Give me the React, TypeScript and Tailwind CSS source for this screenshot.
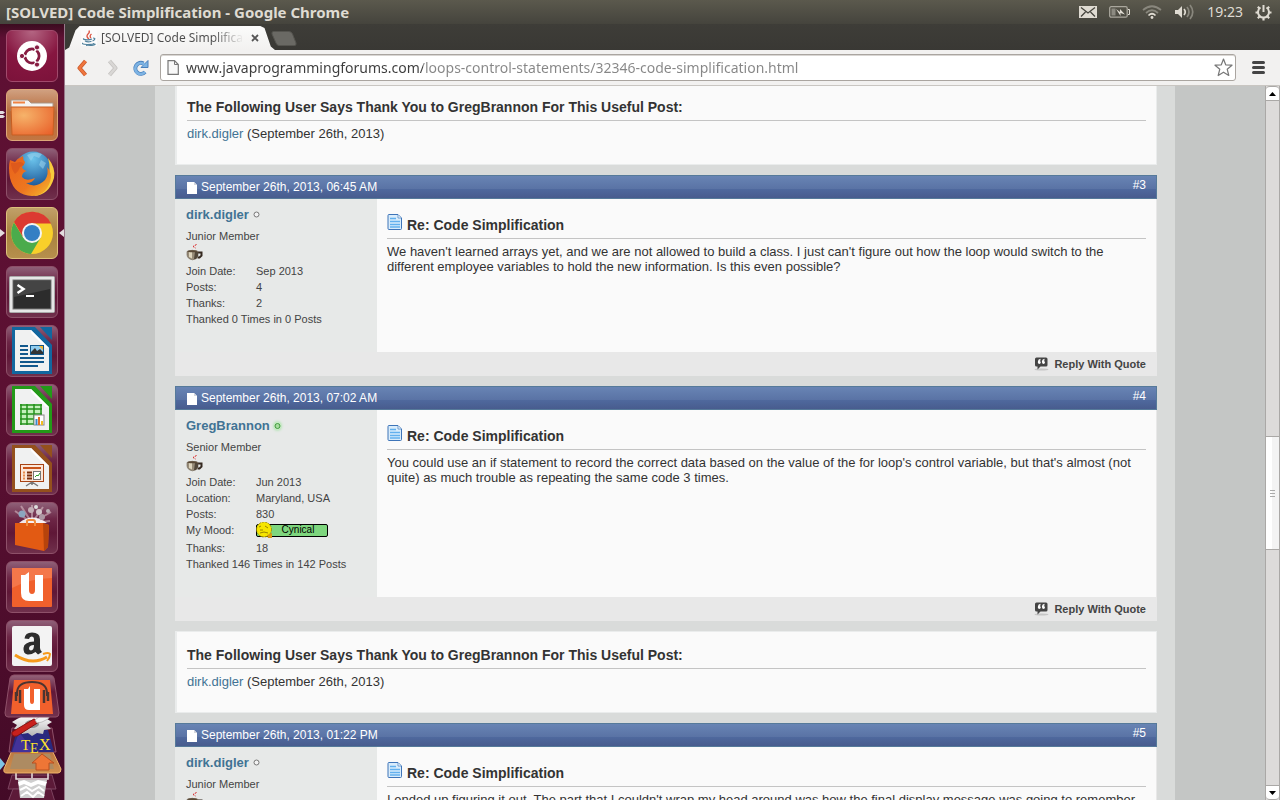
import type { ReactNode } from 'react';

type Stat = { label: string; value: ReactNode };

type PostData = {
  id: number;
  date: string;
  author: string;
  online: boolean;
  rank: string;
  stats: Stat[];
  thanked: string;
  body: string;
};

function CoffeeIcon() {
  return (
    <svg width="17" height="17" viewBox="0 0 17 17" className="block" aria-hidden="true">
      <path d="M10.500 0.500 L7 2.500 L9.500 4" fill="none" stroke="#d81818" strokeWidth="1" strokeDasharray="2 1" />
      <path d="M12 8.500 H15.500 V11.500 L13.500 13.500 H11.500" fill="none" stroke="#35291f" strokeWidth="2" />
      <path d="M1 7.500 Q6 5 12 7.500 V12 Q10.500 15.800 6.500 15.800 Q1.500 15 1 11 Z" fill="#978c78" stroke="#6b6050" strokeWidth="0.600" />
      <path d="M3 8 H6 V14.500 L3 13 Z" fill="#ddd4bd" />
      <path d="M9 8 H12 V12 L10 15 H8 Z" fill="#51473a" />
      <ellipse cx="6.500" cy="7.200" rx="5" ry="1" fill="#5a4936" />
    </svg>
  );
}

function MoodBadge() {
  return (
    <span className="flex h-4 w-[72px] items-center">
      <svg width="16" height="16" viewBox="0 0 16 16" className="relative z-10 shrink-0" aria-hidden="true">
        <circle cx="8" cy="7.500" r="7.500" fill="#f6e500" stroke="#8a7a00" strokeWidth="0.800" strokeDasharray="2 1" />
        <path d="M3 5 L5 4 M4 8 H7 M9 4 L12 6 M4 11 Q8 9 12 11" fill="none" stroke="#9a8500" strokeWidth="1" />
        <path d="M11 13 L16 11 V16 H12 Z" fill="#d79b12" />
      </svg>
      <span className="-ml-4 flex h-[13px] flex-1 items-center justify-center rounded-xs border border-black bg-[#7ed67e] pl-3 text-[10px] leading-none text-black">
        Cynical
      </span>
    </span>
  );
}

const posts: Record<'three' | 'four' | 'five', PostData> = {
  three: {
    id: 3,
    date: 'September 26th, 2013, 06:45 AM',
    author: 'dirk.digler',
    online: false,
    rank: 'Junior Member',
    stats: [
      { label: 'Join Date:', value: 'Sep 2013' },
      { label: 'Posts:', value: '4' },
      { label: 'Thanks:', value: '2' },
    ],
    thanked: 'Thanked 0 Times in 0 Posts',
    body: "We haven't learned arrays yet, and we are not allowed to build a class. I just can't figure out how the loop would switch to the different employee variables to hold the new information. Is this even possible?",
  },
  four: {
    id: 4,
    date: 'September 26th, 2013, 07:02 AM',
    author: 'GregBrannon',
    online: true,
    rank: 'Senior Member',
    stats: [
      { label: 'Join Date:', value: 'Jun 2013' },
      { label: 'Location:', value: 'Maryland, USA' },
      { label: 'Posts:', value: '830' },
      { label: 'My Mood:', value: <MoodBadge /> },
      { label: 'Thanks:', value: '18' },
    ],
    thanked: 'Thanked 146 Times in 142 Posts',
    body: "You could use an if statement to record the correct data based on the value of the for loop's control variable, but that's almost (not quite) as much trouble as repeating the same code 3 times.",
  },
  five: {
    id: 5,
    date: 'September 26th, 2013, 01:22 PM',
    author: 'dirk.digler',
    online: false,
    rank: 'Junior Member',
    stats: [
      { label: 'Join Date:', value: 'Sep 2013' },
      { label: 'Posts:', value: '4' },
      { label: 'Thanks:', value: '2' },
    ],
    thanked: 'Thanked 0 Times in 0 Posts',
    body: "I ended up figuring it out. The part that I couldn't wrap my head around was how the final display message was going to remember",
  },
};

function Post({ post }: { post: PostData }) {
  return (
    <article>
      <header className="flex h-6 items-center justify-between border border-[#567a9a] bg-[linear-gradient(#6884b4,#5a73a5_58%,#4f699e_58%,#485c8e)] pr-2.5 pl-[11px] text-xs text-white">
        <span className="flex items-center gap-1">
          <svg width="10" height="13" viewBox="0 0 10 13" aria-hidden="true">
            <path d="M0 1 H7 L10 4 V13 H0 Z" fill="#fff" />
            <path d="M7 1 V4 H10 Z" fill="#d5d8dd" />
          </svg>
          {post.date}
        </span>
        <a href={`#post${post.id}`} className="pb-1">#{post.id}</a>
      </header>
      <div className="flex bg-[#e7e9e8]">
        <div className="w-[202px] shrink-0 pt-2 pb-[25px] pl-[11px] text-[11px] leading-4 text-[#444]">
          <div className="flex h-[15px] items-center gap-1">
            <a href="#member" className="text-[13px] font-bold text-[#417394]">{post.author}</a>
            {post.online ? (
              <svg width="7" height="8" viewBox="0 0 7 8" aria-label="online" className="rounded-full bg-[#c8ecc4] shadow-[0_0_3px_#8ce08c]">
                <circle cx="3.500" cy="4" r="2.500" fill="#a8dca0" stroke="#3f9a3c" />
              </svg>
            ) : (
              <svg width="8" height="8" viewBox="0 0 8 8" aria-label="offline">
                <circle cx="3.500" cy="3.500" r="2.500" fill="#f3f3f3" stroke="#777" />
              </svg>
            )}
          </div>
          <div className="mt-1.5">{post.rank}</div>
          <CoffeeIcon />
          <dl className="mt-0.5 grid grid-cols-[70px_auto]">
            {post.stats.map((s) => (
              <div key={s.label} className="contents">
                <dt>{s.label}</dt>
                <dd className={typeof s.value === 'string' ? '' : 'pb-0.5'}>{s.value}</dd>
              </div>
            ))}
          </dl>
          <div>{post.thanked}</div>
        </div>
        <div className="min-w-0 flex-1 border-r border-[#e8e8e8] bg-[#fafafa] pt-[15px] pr-2.5 pl-2.5">
          <h2 className="flex h-[25px] items-start gap-1 border-b border-[#c4c4c4] text-sm font-bold text-[#333]">
            <svg width="16" height="17" viewBox="0 0 16 17" aria-hidden="true">
              <path d="M2 0.500 H11 L14.500 4 V14.500 Q14.500 15.500 13.500 15.500 H2 Q1 15.500 1 14.500 V1.500 Q1 0.500 2 0.500 Z" fill="#d9ecfb" stroke="#3e74b8" />
              <path d="M11 1 V4 H14" fill="#fff" stroke="#6f9dd0" />
              <path d="M3 4.500 H9 M3 7.500 H13 M3 10.500 H13 M3 13 H13" stroke="#62b0ee" strokeWidth="1.500" />
            </svg>
            <span className="pt-px">Re: Code Simplification</span>
          </h2>
          <p className="pt-[5px] text-[13px] leading-[15px] text-[#333]">{post.body}</p>
        </div>
      </div>
      <footer className="flex h-6 items-center justify-end bg-[#e8e8e8] pr-[11px]">
        <a href="#reply" className="flex items-center gap-[5px] text-[11px] font-bold text-[#444]">
          <svg width="15" height="14" viewBox="0 0 15 14" aria-hidden="true">
            <ellipse cx="7.500" cy="12.500" rx="7" ry="1" fill="#c6c6c6" />
            <path d="M2.500 0.500 H12 Q13.500 0.500 13.500 2 V8 Q13.500 9.500 12 9.500 H6.500 L3.500 12.500 V9.500 H2.500 Q1 9.500 1 8 V2 Q1 0.500 2.500 0.500 Z" fill="#444" />
            <path d="M6.500 2.500 Q4.500 3 4.500 5 M10.500 2.500 Q8.500 3 8.500 5" fill="none" stroke="#fff" strokeWidth="1.300" />
            <circle cx="5.300" cy="5.500" r="1.400" fill="#fff" />
            <circle cx="9.500" cy="5.500" r="1.400" fill="#fff" />
          </svg>
          Reply With Quote
        </a>
      </footer>
    </article>
  );
}

function ThanksBox() {
  return (
    <section className="h-[82px] border border-l-2 border-[#eaecec] bg-[#fafafa] px-2.5 pt-[13px] text-[13px] text-[#333]">
      <h2 className="h-6 border-b border-[#c4c4c4] text-sm leading-5 font-bold">
        The Following User Says Thank You to GregBrannon For This Useful Post:
      </h2>
      <p className="pt-[5px] leading-[15px]">
        <a href="#member" className="text-[#417394]">dirk.digler</a> (September 26th, 2013)
      </p>
    </section>
  );
}

function Tile({ label, tone, children }: { label: string; tone: string; children: ReactNode }) {
  return (
    <button type="button" aria-label={label} className={`flex size-[52px] shrink-0 items-center justify-center rounded-md border ${tone}`}>
      <svg width="50" height="50" viewBox="0 0 50 50" aria-hidden="true">
        {children}
      </svg>
    </button>
  );
}

const wine = 'border-[#8e5069] bg-[linear-gradient(#8f6078,#6d2646_32%,#5f1737_60%,#70304c)]';

function OfficePage({ color }: { color: string }) {
  return (
    <>
      <path d="M5 1 H28 L45 19 V48 H5 Z" fill={color} />
      <path d="M33 1 H45 V14 Z" fill={color} />
      <path d="M8 4 H24 L42 22 V45 H8 Z" fill="#f0f1f1" />
      <path d="M24 4 L42 22 H39 L24 7 Z" fill="#fff" />
    </>
  );
}

function FoldedStack() {
  return (
    <svg width="65" height="128" viewBox="0 0 65 128" className="-ml-1.5 block shrink-0" aria-hidden="true">
      <defs>
        <linearGradient id="fold" x1="0" y1="0" x2="0" y2="1">
          <stop offset="0" stopColor="#94637a" />
          <stop offset="0.400" stopColor="#611838" />
          <stop offset="1" stopColor="#71314d" />
        </linearGradient>
        <linearGradient id="steel" x1="0" y1="0" x2="0" y2="1">
          <stop offset="0" stopColor="#fff" />
          <stop offset="1" stopColor="#b5b5b5" />
        </linearGradient>
        <linearGradient id="brown" x1="0" y1="0" x2="0" y2="1">
          <stop offset="0" stopColor="#b87540" />
          <stop offset="1" stopColor="#d09050" />
        </linearGradient>
      </defs>
      <path d="M12 103 H52 L56 117 H8 Z" fill="#5c1a38" stroke="#7d4460" />
      <path d="M13 117 H51 L55 130 H8 Z" fill="#5c1a38" stroke="#7d4460" />
      <path d="M18 108 H47 L44 126 H20 Z" fill="#cfcfcf" />
      <path d="M18 110 L24 108 L31 111 L38 108 L47 110 L45 114 L38 112 L31 115 L24 112 L19 114 Z" fill="#fff" />
      <path d="M20 118 L26 115 L32 119 L39 115 L44 119 M21 124 L27 120 L33 125 L38 120 L44 124" fill="none" stroke="#fff" strokeWidth="2" />
      <path d="M16 97 V107 H21 M48 97 V107 H43 M32 99 V106 M18 107 H46" fill="none" stroke="#e9e3e0" strokeWidth="1.500" />
      <path d="M13 76 H51 L61 97 Q61 101 58 101 H7 Q3 101 4 97 Z" fill="url(#brown)" stroke="#f0b36b" />
      <path d="M14 82 H50 L54 97 H10 Z" fill="#ad8b62" />
      <path d="M42 82 L54 91 H49 V98 H36 V91 H32 Z" fill="#ee7636" stroke="#b85020" />
      <path d="M12 56 H52 L56 80 H9 Z" fill="#571331" stroke="#8e5069" />
      <path d="M17 58 H48 L54 80 H11 Z" fill="#29297f" />
      <path d="M19 60 L34 80 H12 Z" fill="#43329a" />
      <text x="21" y="78" fontFamily="Liberation Serif, serif" fontSize="15" fill="#ffe12e">T</text>
      <text x="30" y="81" fontFamily="Liberation Serif, serif" fontSize="14" fill="#ffe12e">E</text>
      <text x="39" y="78" fontFamily="Liberation Serif, serif" fontSize="16" fill="#ffe12e">X</text>
      <path d="M17 47 L12 50 L17 53 L14 57 L21 58 L22 62 L28 61 L32 64 L37 61 L43 62 L44 58 L51 57 L47 53 L52 50 L47 47 L41 44 L25 43 Z" fill="url(#steel)" />
      <ellipse cx="32" cy="52" rx="7" ry="4" fill="#8c8c8c" />
      <path d="M12 60 L34 47 L39 50 L17 64 Q11 65 12 60 Z" fill="#c8201c" stroke="#851010" />
      <path d="M35 48 L40 44 L50 44 L48 47 L42 50 L37 51 Z" fill="#f2f2f2" stroke="#aaa" strokeWidth="0.700" />
      <path d="M14 3 H50 Q53 3 54 6 L59 41 Q59 45 56 45 H8 Q5 45 5 41 L10 6 Q11 3 14 3 Z" fill="url(#fold)" stroke="#8e5069" />
      <path d="M14 8 H50 L53 42 H11 Z" fill="#f2602c" />
      <path d="M17 24 V20 Q18 10 32 10 Q46 10 47 20 V24" fill="none" stroke="#4b3430" strokeWidth="2" />
      <path d="M16 20 V29 M20 18 V31 M44 18 V31 M48 20 V29" stroke="#4b3430" strokeWidth="2.500" />
      <path d="M24 17 H28 L30 14 V29 Q30 32 32 32 Q34 32 34 29 V17 H40 V38 H29 Q24 38 24 33 Z" fill="#fff" />
      <path d="M0 86 L5 92 L0 98 Z" fill="#7fc4e6" />
    </svg>
  );
}

function Launcher() {
  return (
    <nav aria-label="Launcher" className="flex w-[65px] shrink-0 flex-col gap-[7px] overflow-hidden border-r border-[#98788a] bg-[linear-gradient(#3b0c20,#5e1033_14px,#5b1032_50%,#430a27)] pt-1.5 pl-1.5">
      <Tile label="Dash home" tone="border-[#a14a6c] bg-[radial-gradient(circle_at_50%_0,#b46683,#861640_55%,#7b123a)]">
        <circle cx="25" cy="25" r="15" fill="#fff" />
        <circle cx="25" cy="25" r="7" fill="none" stroke="#861c42" strokeWidth="3" />
        <path d="M25 25 L11 25 M25 25 L32 13 M25 25 L32 37" stroke="#fff" strokeWidth="1.500" />
        <circle cx="25" cy="25" r="5.500" fill="#fff" />
        <circle cx="15" cy="25" r="2.600" fill="#861c42" stroke="#fff" />
        <circle cx="30" cy="16.400" r="2.600" fill="#861c42" stroke="#fff" />
        <circle cx="30" cy="33.600" r="2.600" fill="#861c42" stroke="#fff" />
      </Tile>
      <div className="relative shrink-0">
        <Tile label="Files" tone="border-[#dda779] bg-[linear-gradient(#d0a080,#b66b3c_45%,#c27642)]">
          <path d="M4 10 H21 L24 13 H46 V21 H4 Z" fill="#f5f4f2" stroke="#a99483" />
          <path d="M6 12.500 H18" stroke="#ef8342" strokeWidth="2" />
          <path d="M4 17 H47 L46 45 H5 Z" fill="url(#folder)" stroke="#c75f22" />
          <defs>
            <radialGradient id="folder" cx="0.300" cy="0.300" r="0.900">
              <stop offset="0" stopColor="#f6b36a" />
              <stop offset="1" stopColor="#e9622b" />
            </radialGradient>
          </defs>
        </Tile>
        <svg width="5" height="8" viewBox="0 0 5 8" className="absolute top-[22px] -left-1.5" aria-hidden="true">
          <path d="M0 0 H3 L5 1.500 L3 3 H0 Z M0 4 H3 L5 5.500 L3 7 H0 Z" fill="#e3dcdf" />
        </svg>
      </div>
      <Tile label="Firefox" tone={wine}>
        <circle cx="26" cy="21" r="18.500" fill="url(#globe)" />
        <path d="M20 6 Q27 2 35 5 L32 9 L27 7 L24 12 Z M34 11 L39 14 L36 20 L32 16 Z" fill="#a4d9f2" opacity="0.500" />
        <path d="M41 9 Q49 19 47 29 Q42 46 27 47 Q38 40 39 31 Q45 22 41 9 Z" fill="#f8cb3c" />
        <path d="M3 11 L8 13 Q11 9 16 7 Q16 11 18 13 Q18 15 15 18 Q16 21 20 22 Q15 23 15 28 Q19 33 28 29 Q26 34 19 34 Q29 40 38 31 Q42 25 40 18 Q46 24 43 33 Q38 47 25 47 Q7 46 3 29 Q1 18 3 11 Z" fill="url(#fox)" />
        <path d="M4 14 L9 14 Q13 12 16 14 L17 16 L13 18 Q12 22 8 25 Q4 20 4 14 Z" fill="#d9541c" opacity="0.700" />
        <defs>
          <linearGradient id="fox" x1="0" y1="0" x2="1" y2="1">
            <stop offset="0" stopColor="#e8601a" />
            <stop offset="0.600" stopColor="#ee7720" />
            <stop offset="1" stopColor="#f6bd2e" />
          </linearGradient>
          <radialGradient id="globe" cx="0.500" cy="0.200" r="0.800">
            <stop offset="0" stopColor="#6cc4ec" />
            <stop offset="1" stopColor="#164f92" />
          </radialGradient>
        </defs>
      </Tile>
      <div className="relative w-[59px] shrink-0">
        <Tile label="Google Chrome" tone="border-[#ddc07c] bg-[linear-gradient(#c1a069,#a9823f_50%,#b68f4c)]">
          <circle cx="25" cy="25" r="21" fill="#f8cf2a" />
          <path d="M7 14.500 A21 21 0 0 0 24 46 L33.500 30 L16.500 30 Z" fill="#4bab4c" />
          <path d="M7 14 A21 21 0 0 1 44 15.500 H25 L16 29 Z" fill="#dc3a31" />
          <circle cx="25" cy="25" r="10" fill="#f4f4f4" />
          <circle cx="25" cy="25" r="8" fill="#347fc4" />
        </Tile>
        <svg width="5" height="8" viewBox="0 0 5 8" className="absolute top-[22px] -left-1.5" aria-hidden="true">
          <path d="M0 0 L5 4 L0 8 Z" fill="#e3dcdf" />
        </svg>
        <svg width="5" height="8" viewBox="0 0 5 8" className="absolute top-[22px] right-px" aria-hidden="true">
          <path d="M5 0 L0 4 L5 8 Z" fill="#e3dcdf" />
        </svg>
      </div>
      <Tile label="Terminal" tone={wine}>
        <rect x="2.500" y="9.500" width="45" height="36" rx="1" fill="#e6e6e6" stroke="#aaa" />
        <rect x="6" y="13" width="38" height="29" fill="#2c2c2c" stroke="#777" />
        <path d="M7 14 H43 V22 L7 30 Z" fill="#444" />
        <path d="M10.500 18 L16.500 22 L10.500 26" fill="none" stroke="#fff" strokeWidth="2.500" />
        <path d="M19 29 H27" stroke="#fff" strokeWidth="2" />
      </Tile>
      <Tile label="LibreOffice Writer" tone={wine}>
        <OfficePage color="#12679f" />
        <path d="M13 20 H21 M13 24 H21 M13 28 H21 M13 32 H37 M13 36 H37 M13 40 H31" stroke="#12588c" strokeWidth="2" />
        <rect x="23.500" y="19.500" width="13" height="9" fill="#8fcdf0" stroke="#12588c" />
        <path d="M24 28 V26 L28 22 L30 25 L33 23 L36 26 V28 Z" fill="#333" />
        <path d="M32 20 H36 V24 Z" fill="#f3b52c" />
      </Tile>
      <Tile label="LibreOffice Calc" tone={wine}>
        <OfficePage color="#239918" />
        <rect x="13" y="19" width="22" height="20" fill="#c4f0bb" />
        <path d="M13 20 H35 M13 24 H35 M13 29 H35 M13 34 H35 M13 39 H30 M14 19 V40 M20 19 V40 M27 19 V40 M34 19 V30" stroke="#23911b" strokeWidth="1.500" fill="none" />
        <rect x="27" y="30" width="10" height="10" fill="#fff" stroke="#888" />
        <path d="M29.500 34 V40" stroke="#3c87c8" strokeWidth="2" />
        <path d="M32 32 V40" stroke="#e36c22" strokeWidth="2" />
        <path d="M35 36 V40" stroke="#f2bd21" strokeWidth="2" />
      </Tile>
      <Tile label="LibreOffice Impress" tone={wine}>
        <OfficePage color="#94501d" />
        <rect x="13.500" y="20.500" width="23" height="17" fill="#fbe6d8" stroke="#a84314" />
        <path d="M16 24 H34" stroke="#c8531a" strokeWidth="2" />
        <path d="M16 28.500 H18 M16 31.500 H18 M16 34.500 H18" stroke="#e88c4c" strokeWidth="2" />
        <path d="M20 28.500 H25 M20 31.500 H25 M20 34.500 H25" stroke="#7d2f0c" strokeWidth="2" />
        <rect x="26.500" y="27.500" width="7" height="8" fill="#fff" stroke="#777" />
        <path d="M28 33 L30 31 L31 32 L33 29" stroke="#2d9f2d" fill="none" />
        <path d="M25 38 L19 42 M25 38 L31 42 M25 38 V41" stroke="#777" strokeWidth="1.500" />
      </Tile>
      <Tile label="Ubuntu Software Center" tone={wine}>
        <path d="M25 20 L8 8 M25 20 L14 3 M25 20 L25 2 M25 20 L36 4 M25 20 L44 9 M25 20 L43 18" stroke="#e7cfd4" opacity="0.500" strokeWidth="2" />
        <path d="M12 20 Q25 9 40 20 Z" fill="#fff" opacity="0.900" />
        <circle cx="15" cy="11" r="3.500" fill="#8ba6bf" />
        <circle cx="24" cy="7" r="3" fill="#c3aeb6" />
        <circle cx="32" cy="9" r="3" fill="#d4c6cb" />
        <circle cx="35" cy="14" r="3" fill="#ad97a3" />
        <circle cx="29" cy="4" r="2" fill="#ddd" />
        <circle cx="41" cy="8" r="2" fill="#bcaeb5" />
        <path d="M8 20 L36 20 L42 22 L41 44 L37 48 L8 42 Z" fill="#e25a13" />
        <path d="M36 20 L42 22 L41 44 L37 48 Z" fill="#b6430c" />
        <path d="M20 23 V18 Q20 17 22 17 H26 Q28 17 28 19 V23" fill="none" stroke="#f08c3c" strokeWidth="2" />
      </Tile>
      <Tile label="Ubuntu One" tone={wine}>
        <rect x="5" y="6" width="40" height="39" rx="1" fill="#f0602c" />
        <path d="M5 6 H45 V16 Q25 16 5 26 Z" fill="#f4774a" />
        <path d="M14 13 H18 L22 10 V28 Q22 32 25 32 Q28 32 28 28 V13 H36 V39 H22 Q14 39 14 31 Z" fill="#fff" />
      </Tile>
      <Tile label="Amazon" tone={wine}>
        <rect x="5" y="5" width="40" height="40" rx="2" fill="#f3f3f3" />
        <path d="M35 31 L31 33.500 L28.500 31 Q24 34 20.500 33.500 Q16 32.500 16.500 27 Q17 21 27 20.500 V18.500 Q27 15.500 24.500 15.500 Q22.500 15.500 22 18 L17.500 17.500 Q18 11.500 25 11.500 Q33 11.500 33 18 V27 Q33 29 35 31 Z M27 24 Q22 24 22 27.500 Q22 29.500 24 29.500 Q27 29 27 24 Z" fill="#2d2d2d" fillRule="evenodd" />
        <path d="M8 34 Q25 45 40 36" fill="none" stroke="#f79a1b" strokeWidth="3" />
        <path d="M36 33 Q42 31 43 33 Q43 36 40 40" fill="none" stroke="#f79a1b" strokeWidth="2" />
      </Tile>
      <div className="-mt-[7px]">
        <FoldedStack />
      </div>
    </nav>
  );
}

function TopPanel() {
  return (
    <header className="flex h-6 shrink-0 items-center justify-between bg-[linear-gradient(#5b594d,#45443d)] pr-2 pl-1.5 font-['Noto_Sans',sans-serif] text-[#dfdbd2]">
      <h1 className="text-[15px] leading-5 font-bold">[SOLVED] Code Simplification - Google Chrome</h1>
      <div className="flex items-center gap-3">
        <svg width="18" height="12" viewBox="0 0 18 12" aria-label="Mail">
          <rect width="18" height="12" fill="#dfdbd2" />
          <path d="M2 1.500 L9 7 L16 1.500 M2 10.500 L6.500 6 M16 10.500 L11.500 6" fill="none" stroke="#45443d" strokeWidth="1.300" />
        </svg>
        <svg width="21" height="12" viewBox="0 0 21 12" aria-label="Battery">
          <rect x="0.700" y="0.700" width="17.500" height="10.500" rx="1.500" fill="none" stroke="#aaa79d" strokeWidth="1.300" />
          <path d="M19 3.500 H20.500 V8.500 H19" fill="none" stroke="#dfdbd2" />
          <rect x="2.500" y="2.500" width="4" height="7" fill="#8c8a81" />
          <path d="M7 3 L11 6 L11 3 L16 8.500 L11.500 7 L11.500 10 Z" fill="#dfdbd2" />
        </svg>
        <svg width="20" height="14" viewBox="0 0 20 14" aria-label="Network">
          <path d="M1 5 Q10 -2.500 19 5" fill="none" stroke="#89877d" strokeWidth="1.700" />
          <path d="M4 8 Q10 2.500 16 8" fill="none" stroke="#89877d" strokeWidth="1.700" />
          <path d="M6.500 10.500 Q10 7 13.500 10.500" fill="none" stroke="#dfdbd2" strokeWidth="1.700" />
          <circle cx="10" cy="12.500" r="1.400" fill="#dfdbd2" />
        </svg>
        <svg width="21" height="16" viewBox="0 0 21 16" aria-label="Volume">
          <path d="M1 6 H4 L8 2 V14 L4 10 H1 Z" fill="#dfdbd2" />
          <path d="M10 5 Q12.500 8 10 11" fill="none" stroke="#dfdbd2" strokeWidth="1.700" />
          <path d="M13 3 Q17 8 13 13 M16 1 Q21.500 8 16 15" fill="none" stroke="#89877d" strokeWidth="1.700" />
        </svg>
        <time className="text-sm">19:23</time>
        <svg width="17" height="17" viewBox="0 0 17 17" aria-label="System">
          <path d="M5.500 3.500 A5.500 5.500 0 1 0 11.500 3.500" fill="none" stroke="#dfdbd2" strokeWidth="2" />
          <path d="M8.500 1 V8" stroke="#dfdbd2" strokeWidth="2" />
          <path d="M8.500 14 V16.500 M0.500 8.500 H3 M14 8.500 H16.500 M2.800 2.800 L4.500 4.500 M14.200 2.800 L12.500 4.500 M2.800 14.200 L4.500 12.500 M14.200 14.200 L12.500 12.500" stroke="#dfdbd2" strokeWidth="2.200" />
        </svg>
      </div>
    </header>
  );
}

function JavaIcon() {
  return (
    <svg width="16" height="16" viewBox="0 0 16 16" className="shrink-0" aria-hidden="true">
      <rect width="16" height="16" fill="#fbfbfb" />
      <path d="M8 9 Q4.500 6.500 7 4 Q9 2.500 8 0.500 M10 8 Q8 6 10.500 4" fill="none" stroke="#dc5340" strokeWidth="1.300" />
      <path d="M3 8.500 Q1 9.500 6.500 9.800 Q9 9.800 11 9 M4 11 Q7 12.500 10.500 11.200 M12 8 Q14.500 8 13.500 9.500 Q13 10.500 11.500 11 M2 13 Q0 14.200 6 14.500 Q13 14.500 13 13 M5 15.700 Q12 16 14.500 14" fill="none" stroke="#51829d" strokeWidth="1.200" />
    </svg>
  );
}

function BrowserChrome() {
  return (
    <div className="shrink-0 font-['Noto_Sans',sans-serif]">
      <div className="flex h-[26px] items-end bg-[linear-gradient(#3e3d38,#393834)]">
        <div className="flex h-6 w-[210px] items-center bg-[linear-gradient(#fbfbfa,#f2f1f0)] pr-2.5 pl-4 [clip-path:polygon(0_100%,2%_90%,5%_18%,7%_0,93%_0,95%_8%,98%_85%,100%_100%)]">
          <JavaIcon />
          <span className="ml-1 w-[142px] overflow-hidden bg-[linear-gradient(to_right,#4c4c4c_112px,#f2f1f0_142px)] bg-clip-text text-xs leading-5 whitespace-nowrap text-transparent">
            [SOLVED] Code Simplifica
          </span>
          <button type="button" aria-label="Close tab" className="ml-2">
            <svg width="8" height="8" viewBox="0 0 8 8" aria-hidden="true">
              <path d="M1 1 L7 7 M7 1 L1 7" stroke="#555" strokeWidth="1.800" />
            </svg>
          </button>
        </div>
        <button type="button" aria-label="New tab" className="-ml-1 mb-1 h-[15px]">
          <svg width="26" height="15" viewBox="0 0 26 15" className="block" aria-hidden="true">
            <path d="M2.500 0.500 H18 Q20.500 0.500 21.500 3 L25 12 Q25.500 14.500 23.500 14.500 H8 Q6 14.500 5 12 L1 3 Q0.500 0.500 2.500 0.500 Z" fill="#6a6964" stroke="#55544f" />
          </svg>
        </button>
      </div>
      <div className="flex h-9 items-center border-b border-[#c9c6c2] bg-[#f2f1f0] pr-[15px] pl-3">
        <button type="button" aria-label="Back">
          <svg width="11" height="18" viewBox="0 0 11 18" className="block" aria-hidden="true">
            <path d="M8.500 2 L2.500 9 L8.500 16" fill="none" stroke="#c85a2c" strokeWidth="4" strokeLinejoin="round" />
            <path d="M8.500 2 L2.500 9 L8.500 16" fill="none" stroke="#f0763e" strokeWidth="2.500" strokeLinejoin="round" />
          </svg>
        </button>
        <button type="button" aria-label="Forward" className="ml-[19px]">
          <svg width="11" height="18" viewBox="0 0 11 18" className="block" aria-hidden="true">
            <path d="M2.500 2 L8.500 9 L2.500 16" fill="none" stroke="#c4c2c0" strokeWidth="4" strokeLinejoin="round" />
            <path d="M2.500 2 L8.500 9 L2.500 16" fill="none" stroke="#d9d7d5" strokeWidth="2.500" strokeLinejoin="round" />
          </svg>
        </button>
        <button type="button" aria-label="Reload" className="ml-3.5">
          <svg width="18" height="18" viewBox="0 0 18 18" className="block" aria-hidden="true">
            <path d="M13 13 A5.500 5.500 0 1 1 11.500 4.500" fill="none" stroke="#4a80bc" strokeWidth="4" />
            <path d="M16 1.500 V8.500 H9 Z" fill="#7db3e3" stroke="#4a80bc" />
            <path d="M13 13 A5.500 5.500 0 1 1 12.500 5.500" fill="none" stroke="#7db3e3" strokeWidth="2.600" />
          </svg>
        </button>
        <div className="ml-2.5 flex h-[27px] min-w-0 flex-1 items-center rounded-[3px] border border-[#aaa5a0] bg-white pr-0.5 pl-1.5 shadow-[inset_0_1px_0_#d9d6d3]">
          <svg width="12" height="15" viewBox="0 0 12 15" className="shrink-0" aria-hidden="true">
            <path d="M1 0.700 H7.500 L11.300 4.500 V14.300 H1 Z" fill="#f8f8f8" stroke="#777" strokeWidth="1.200" />
            <path d="M7.500 1 V4.500 H11" fill="none" stroke="#777" />
          </svg>
          <input
            aria-label="Address"
            defaultValue="www.javaprogrammingforums.com/loops-control-statements/32346-code-simplification.html"
            className="ml-[7px] min-w-0 flex-1 bg-[linear-gradient(to_right,#3c3c3c_237px,#868686_237px)] bg-clip-text text-sm text-transparent outline-none"
          />
          <svg width="19" height="19" viewBox="0 0 19 19" className="shrink-0" aria-label="Bookmark">
            <path d="M9.500 1 L11.700 6.800 L18 7.200 L13.200 11.200 L14.800 17.500 L9.500 14.200 L4.200 17.500 L5.800 11.200 L1 7.200 L7.300 6.800 Z" fill="#fff" stroke="#777" strokeWidth="1.200" strokeLinejoin="round" />
          </svg>
        </div>
        <button type="button" aria-label="Menu" className="ml-4">
          <svg width="13" height="13" viewBox="0 0 13 13" className="block" aria-hidden="true">
            <path d="M1.500 1.500 H11.500 M1.500 6.500 H11.500 M1.500 11.500 H11.500" stroke="#444" strokeWidth="3" strokeLinecap="round" />
          </svg>
        </button>
      </div>
    </div>
  );
}

function Scrollbar() {
  return (
    <div className="flex w-[15px] shrink-0 flex-col border-x border-[#aaa8a6] bg-[#dddbda]">
      <button type="button" aria-label="Scroll up" className="flex h-[15px] shrink-0 items-center justify-center rounded-t-sm border-y border-[#aaa8a6] bg-white">
        <svg width="7" height="4" viewBox="0 0 7 4" aria-hidden="true"><path d="M0 4 L3.500 0 L7 4 Z" /></svg>
      </button>
      <div className="grow-[335] basis-0" />
      <div className="flex grow-[112] basis-0 flex-col items-center justify-center gap-0.5 border-y border-[#aaa8a6] bg-[linear-gradient(to_right,#fff_50%,#f3f3f3_50%)]">
        <span className="h-px w-[5px] bg-[#aaa]" />
        <span className="h-px w-[5px] bg-[#aaa]" />
        <span className="h-px w-[5px] bg-[#aaa]" />
      </div>
      <div className="grow-[235] basis-0" />
      <button type="button" aria-label="Scroll down" className="flex h-[15px] shrink-0 items-center justify-center rounded-b-sm border-y border-[#aaa8a6] bg-white">
        <svg width="7" height="4" viewBox="0 0 7 4" aria-hidden="true"><path d="M0 0 L3.500 4 L7 0 Z" /></svg>
      </button>
    </div>
  );
}

export default function App() {
  return (
    <div className="flex h-screen flex-col overflow-hidden">
      <TopPanel />
      <div className="flex min-h-0 flex-1">
        <Launcher />
        <div className="flex min-w-0 flex-1 flex-col">
          <BrowserChrome />
          <div className="flex min-h-0 flex-1">
            <main className="min-w-0 flex-1 overflow-hidden bg-[#c4c6c5] font-['Liberation_Sans',Arial,sans-serif]">
              <div className="mx-auto -mt-[3px] flex w-[85%] flex-col gap-2.5 bg-[#d9dbda] pr-[18px] pl-5">
                <ThanksBox />
                <Post post={posts.three} />
                <Post post={posts.four} />
                <ThanksBox />
                <Post post={posts.five} />
              </div>
            </main>
            <Scrollbar />
          </div>
        </div>
      </div>
    </div>
  );
}
